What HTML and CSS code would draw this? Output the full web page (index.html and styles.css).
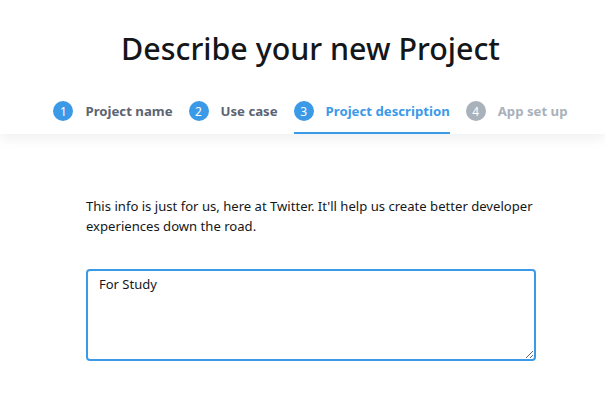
FILE: index.html
```html
<!DOCTYPE html>
<html>
<head>
<meta charset="utf-8">
<link rel="stylesheet" href="styles.css">
</head>
<body>
<header class="header">
  <h1 class="title">Describe your new Project</h1>
  <nav class="steps">
    <div class="step done"><span class="num">1</span><span class="label">Project name</span></div>
    <div class="step done"><span class="num">2</span><span class="label">Use case</span></div>
    <div class="step active"><span class="num">3</span><span class="label">Project description</span></div>
    <div class="step todo"><span class="num">4</span><span class="label">App set up</span></div>
  </nav>
</header>
<main class="content">
  <p class="info">This info is just for us, here at Twitter. It'll help us create better developer experiences down the road.</p>
  <textarea class="desc">For Study</textarea>
</main>
</body>
</html>
```
FILE: styles.css
```css
html, body {
  margin: 0;
  padding: 0;
  background: #fff;
}
body {
  font-family: "Noto Sans", "Open Sans", sans-serif;
  color: #14171a;
}
.header {
  background: #fff;
  box-shadow: 0 4px 12px rgba(20, 30, 50, 0.07);
  position: relative;
  padding-top: 27px;
  padding-left: 16px;
}
.title {
  margin: 0;
  text-align: center;
  font-size: 30.4px;
  font-weight: 500;
  line-height: 44px;
  color: #14171a;
}
.steps {
  display: flex;
  justify-content: center;
  gap: 16px;
  margin-top: 21px;
}
.step {
  display: flex;
  align-items: center;
  gap: 12px;
  height: 42px;
  box-sizing: border-box;
  border-bottom: 2px solid transparent;
  padding-bottom: 2px;
}
.num {
  width: 20px;
  height: 20px;
  border-radius: 50%;
  background: #3b9ae8;
  color: #fff;
  font-size: 12px;
  display: flex;
  align-items: center;
  justify-content: center;
  font-weight: 400;
}
.label {
  font-size: 13.2px;
  font-weight: 700;
  color: #5b6472;
}
.step.active {
  border-bottom-color: #3b9ae8;
}
.step.active .label {
  color: #3b9ae8;
}
.step.todo .num {
  background: #a9b1bb;
}
.step.todo .label {
  color: #a9b1bb;
}
.content {
  padding: 62px 0 0 86px;
}
.info {
  margin: 0;
  width: 460px;
  font-size: 13.1px;
  line-height: 20px;
  color: #14171a;
}
.desc {
  display: block;
  margin-top: 33px;
  width: 450px;
  height: 92px;
  box-sizing: border-box;
  border: 2px solid #3b9ae8;
  border-radius: 4px;
  padding: 4px 11px;
  font-family: "Noto Sans", "Open Sans", sans-serif;
  font-size: 13px;
  color: #14171a;
  outline: none;
}
```
